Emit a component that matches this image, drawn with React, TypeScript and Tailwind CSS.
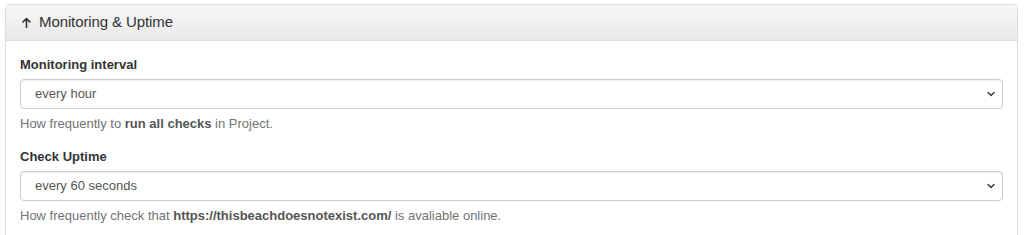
import React from 'react';

const Chevron: React.FC = () => (
  <svg width="10" height="10" viewBox="0 0 10 10" className="pointer-events-none absolute right-[7px] top-1/2 -translate-y-1/2">
    <path d="M2 3.5 L5 6.5 L8 3.5" fill="none" stroke="#444" strokeWidth="1.6" strokeLinecap="round" strokeLinejoin="round" />
  </svg>
);

const ArrowUp: React.FC = () => (
  <svg width="9" height="11" viewBox="0 0 9 11" className="mr-[8px]">
    <path d="M4.5 10.5 V1.5 M1 5 L4.5 1.5 L8 5" fill="none" stroke="#333" strokeWidth="1.6" strokeLinecap="round" strokeLinejoin="round" />
  </svg>
);

const SelectField: React.FC<{ label: string; value: string; options: string[]; children: React.ReactNode }> = ({ label, value, options, children }) => (
  <div className="flex flex-col">
    <label className="text-[13px] leading-[18px] font-bold text-[#333] mb-[5px]">{label}</label>
    <div className="relative">
      <select
        defaultValue={value}
        className="appearance-none w-full h-[30px] pl-[14px] pr-8 text-[13px] text-[#555] bg-white border border-[#ccc] rounded-[4px] shadow-[inset_0_1px_1px_rgba(0,0,0,0.075)] outline-none"
      >
        {options.map((o) => (
          <option key={o}>{o}</option>
        ))}
      </select>
      <Chevron />
    </div>
    <p className="mt-[6px] text-[13px] leading-[18px] text-[#737373]">{children}</p>
  </div>
);

const App: React.FC = () => {
  return (
    <div className="w-[1024px] h-[235px] bg-white overflow-hidden pt-[4px] pl-[5px]" style={{ fontFamily: '"Liberation Sans", Arial, sans-serif' }}>
      <div className="w-[1013px] border border-[#ddd] rounded-[4px] bg-white shadow-[0_1px_2px_rgba(0,0,0,0.05)]">
        <div className="h-[36px] flex items-center px-[16px] border-b border-[#ddd] rounded-t-[3px] bg-gradient-to-b from-[#f7f7f7] to-[#e9e9e9] text-[#333] text-[15px]">
          <ArrowUp />
          <span className="tracking-[-0.1px]">Monitoring &amp; Uptime</span>
        </div>
        <div className="px-[14px] pt-[15px] pb-[15px] flex flex-col gap-[15px]">
          <SelectField label="Monitoring interval" value="every hour" options={['every minute', 'every 10 minutes', 'every hour', 'every day']}>
            How frequently to <b className="text-[#555]">run all checks</b> in Project.
          </SelectField>
          <SelectField label="Check Uptime" value="every 60 seconds" options={['every 30 seconds', 'every 60 seconds', 'every 5 minutes']}>
            How frequently check that <b className="text-[#555]">https://thisbeachdoesnotexist.com/</b> is avaliable online.
          </SelectField>
        </div>
      </div>
    </div>
  );
};

export default App;
